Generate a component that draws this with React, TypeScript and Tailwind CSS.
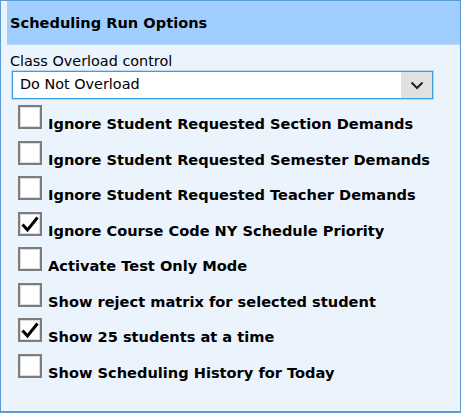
import React from 'react';

type Option = {
  id: string;
  label: string;
  checked: boolean;
};

const options: Option[] = [
  {id: 'section', label: 'Ignore Student Requested Section Demands', checked: false},
  {id: 'semester', label: 'Ignore Student Requested Semester Demands', checked: false},
  {id: 'teacher', label: 'Ignore Student Requested Teacher Demands', checked: false},
  {id: 'priority', label: 'Ignore Course Code NY Schedule Priority', checked: true},
  {id: 'test', label: 'Activate Test Only Mode', checked: false},
  {id: 'reject', label: 'Show reject matrix for selected student', checked: false},
  {id: 'batch', label: 'Show 25 students at a time', checked: true},
  {id: 'history', label: 'Show Scheduling History for Today', checked: false},
];

const CheckBox = ({checked}: {checked: boolean}) => (
  <span className="w-[24px] h-[24px] shrink-0 border-2 border-[#7d7d7d] bg-white flex items-center justify-center shadow-[inset_0_0_0_1px_#dcdcdc]">
    {checked && (
      <svg width="20" height="18" viewBox="0 0 20 18">
        <path d="M2.5 9.5 L7.5 15 L17.5 2.5" fill="none" stroke="#000" strokeWidth="3" strokeLinejoin="miter"/>
      </svg>
    )}
  </span>
);

export default function App() {
  return (
    <div className="w-[461px] h-[413px] border border-[#5b9bd5] border-b-2 bg-[#ebf4fd] flex flex-col font-['DejaVu_Sans',sans-serif] text-black">
      <div className="ml-[6px] h-[44px] bg-[#a0cfff] border-b border-[#b8dbff] flex items-center pl-[3px]">
        <span className="text-[14.6px] font-bold">Scheduling Run Options</span>
      </div>

      <div className="pl-[9px] pr-[27px] pt-[8px]">
        <div className="text-[14.4px] leading-[17px]">Class Overload control</div>
        <div className="mt-[1px] ml-[2px] h-[28px] border border-[#3d9de0] bg-white flex items-center shadow-[0_0_0_1px_#b5dcf7]">
          <span className="flex-1 pl-[7px] text-[14.4px]">Do Not Overload</span>
          <span className="w-[31px] h-full bg-[#e1e1e1] flex items-center justify-center">
            <svg width="14" height="9" viewBox="0 0 14 9">
              <path d="M1.5 1.5 L7 7 L12.5 1.5" fill="none" stroke="#222" strokeWidth="2"/>
            </svg>
          </span>
        </div>
      </div>

      <div className="pl-[17px] pt-[6px] flex flex-col">
        {options.map((opt) => (
          <div key={opt.id} className="h-[35.5px] flex items-start gap-[6px]">
            <CheckBox checked={opt.checked}/>
            <span className="mt-[10px] text-[14.6px] leading-[17px] font-bold whitespace-nowrap">{opt.label}</span>
          </div>
        ))}
      </div>
    </div>
  );
}
